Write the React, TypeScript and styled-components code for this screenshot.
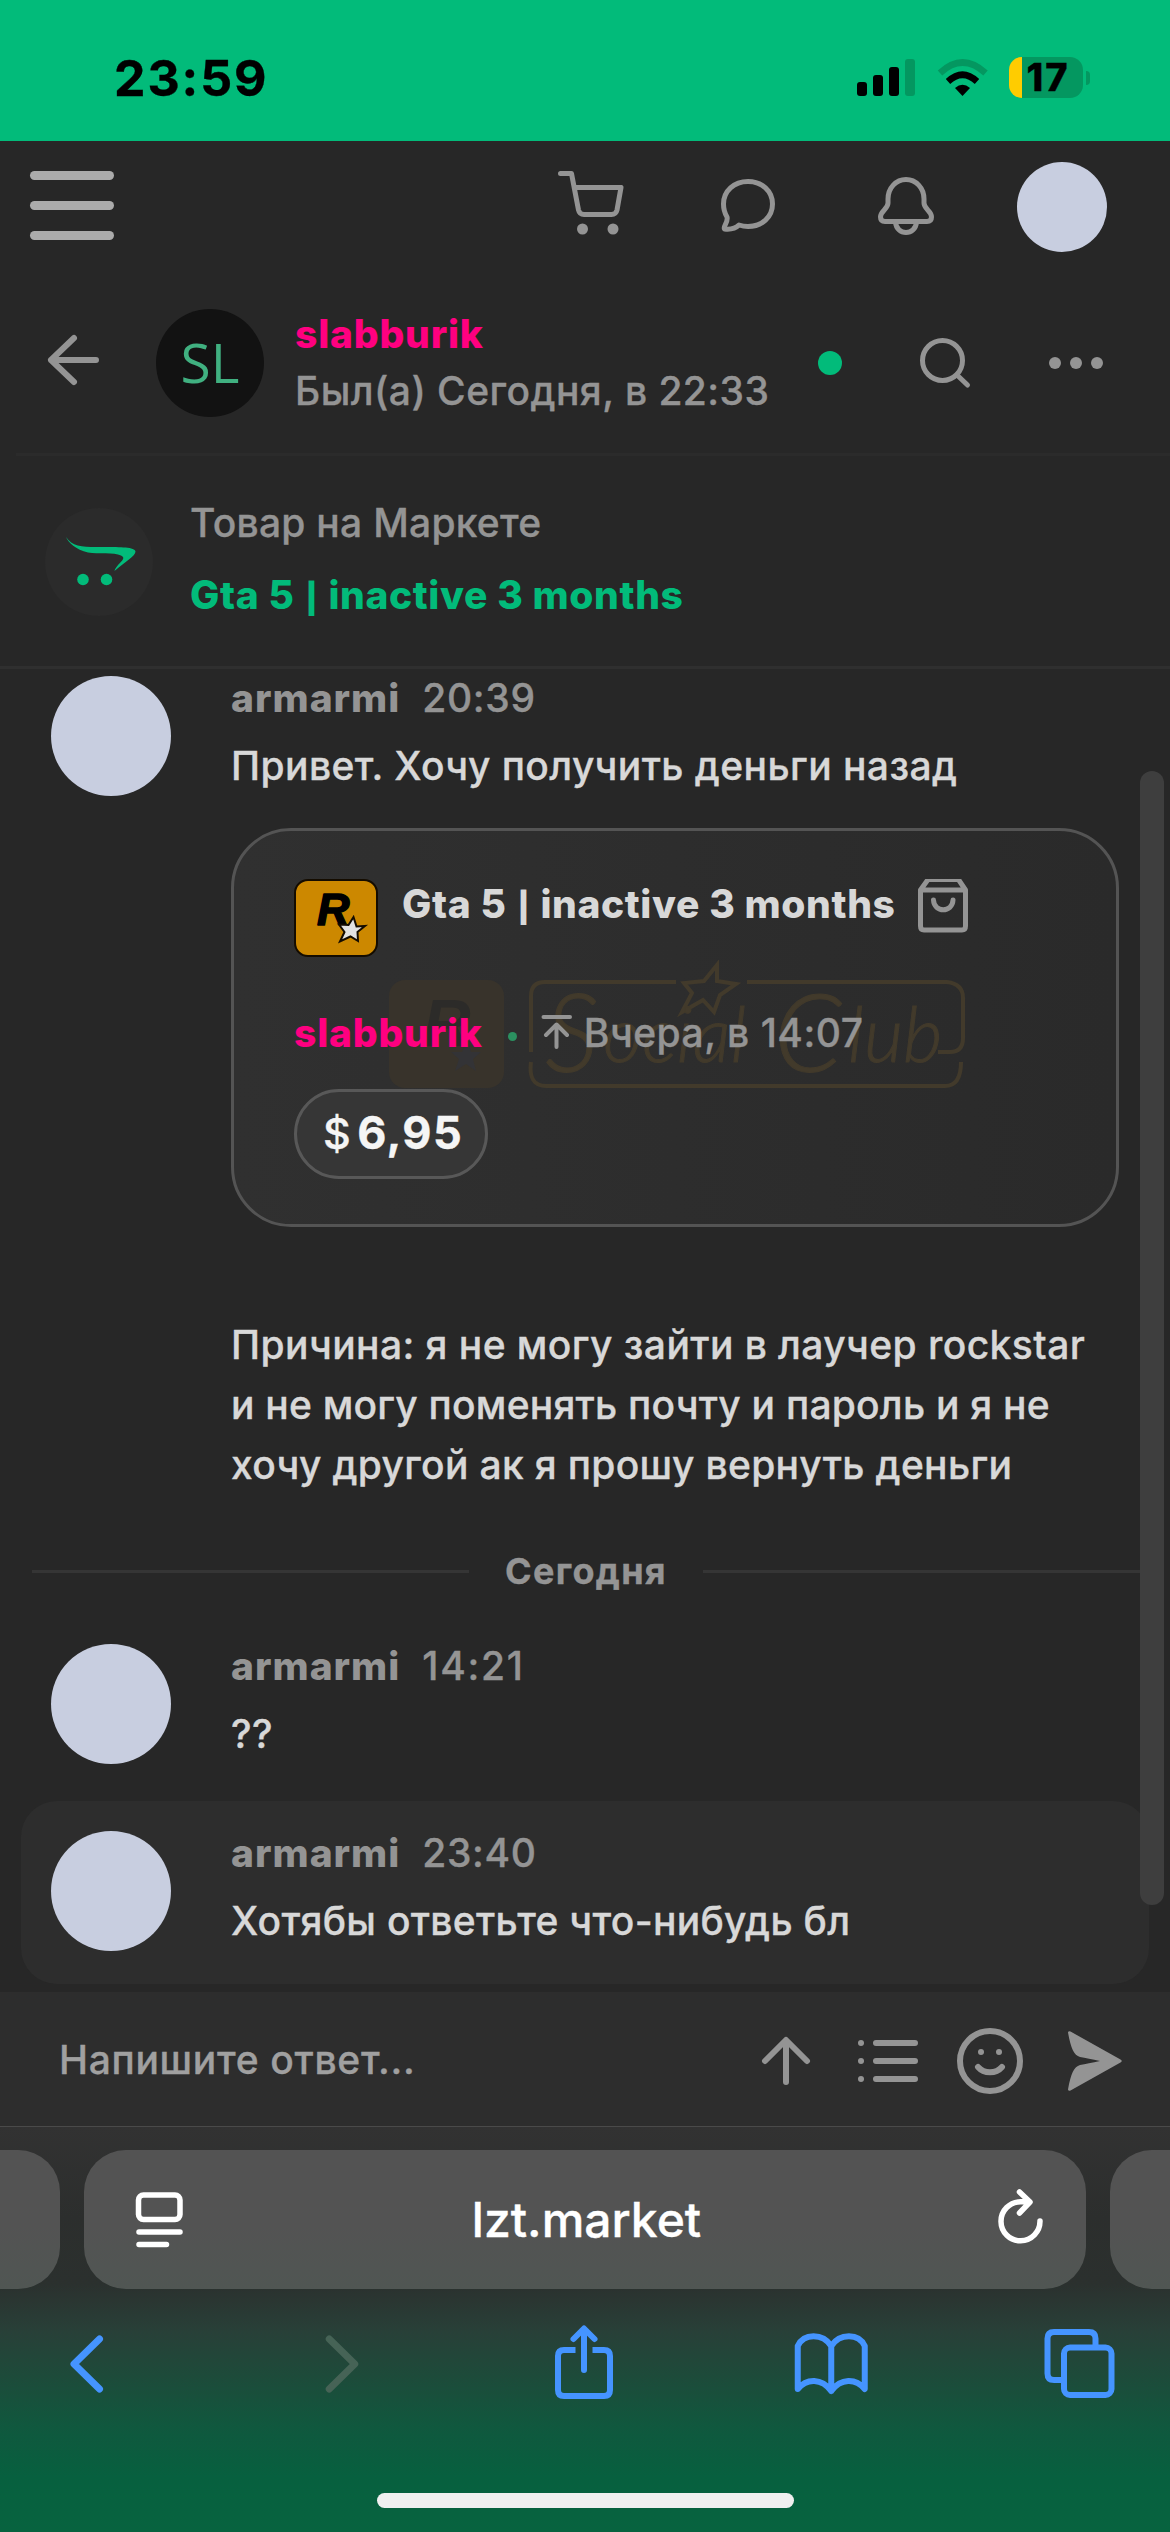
import React from "react";
import styled, { createGlobalStyle } from "styled-components";

const color = {
  brand: "#02bb7a",
  page: "#272727",
  raised: "#2d2d2d",
  muted: "#949494",
  text: "#d8d8d8",
  pink: "#ff0080",
  avatar: "#c8cee0",
  blue: "#4594ff",
};

const GlobalStyle = createGlobalStyle`
  * { box-sizing: border-box; }
  body { margin: 0; background: ${color.page}; }
`;

const Screen = styled.div`
  display: flex;
  flex-direction: column;
  width: 1170px;
  height: 2532px;
  overflow: hidden;
  background: ${color.page};
  color: ${color.text};
  font-family: Inter, "Liberation Sans", sans-serif;
  font-size: 39px;
  font-weight: 500;
  white-space: nowrap;
  -webkit-text-stroke: 0.35px currentColor;
`;

const Icon = styled.svg<{ $gap?: number; $tone?: string; $stroke?: number }>`
  display: block;
  flex: none;
  margin-left: ${(p) => p.$gap ?? 0}px;
  fill: none;
  stroke: ${(p) => p.$tone ?? color.muted};
  stroke-width: ${(p) => p.$stroke ?? 5}px;
  stroke-linecap: round;
  stroke-linejoin: round;
  .solid {
    fill: ${(p) => p.$tone ?? color.muted};
    stroke: none;
  }
`;

/* Status bar */
const StatusBar = styled.header`
  display: flex;
  flex: none;
  height: 141px;
  padding: 0 80px 0 114px;
  background: ${color.brand};
  color: #000;
`;

const Clock = styled.time`
  margin-top: 48px;
  font-size: 50px;
  font-weight: 700;
  line-height: 60px;
  letter-spacing: 1.9px;
`;

const StatusIcons = styled.div`
  display: flex;
  align-items: flex-start;
  margin-left: auto;
  padding-top: 57px;
`;

const Battery = styled.div`
  display: flex;
  align-items: center;
  justify-content: center;
  width: 74px;
  height: 41px;
  margin-left: 20px;
  padding-left: 4px;
  border-radius: 13px;
  background: linear-gradient(90deg, #ffcc00 13px, #049760 13px);
  font-size: 38px;
  font-weight: 800;
  line-height: 41px;
  letter-spacing: 2px;
`;

const BatteryTip = styled.div`
  width: 4px;
  height: 14px;
  margin: 14px 0 0 3px;
  border-radius: 0 4px 4px 0;
  background: #049760;
`;

/* Site navigation */
const SiteNav = styled.nav`
  display: flex;
  flex: none;
  align-items: center;
  height: 132px;
  padding: 0 63px 0 30px;
`;

const Burger = styled.div`
  display: flex;
  flex-direction: column;
  gap: 21px;
  width: 84px;
  margin: 0 auto 3px 0;
`;

const BurgerLine = styled.span`
  height: 9px;
  border-radius: 5px;
  background: #ababab;
`;

const Avatar = styled.div<{ $size: number; $gap?: number }>`
  flex: none;
  width: ${(p) => p.$size}px;
  height: ${(p) => p.$size}px;
  margin-left: ${(p) => p.$gap ?? 0}px;
  border-radius: 50%;
  background: ${color.avatar};
`;

/* Conversation header */
const ChatHeader = styled.header`
  display: flex;
  flex: none;
  align-items: center;
  height: 183px;
  margin-left: 16px;
  padding: 0 63px 0 29px;
  border-bottom: 3px solid #2b2b2b;
`;

const Initials = styled(Avatar)`
  display: flex;
  align-items: center;
  justify-content: center;
  background: #121212;
  color: #40b080;
  font-family: "Open Sans", "Noto Sans", sans-serif;
  font-size: 55px;
  font-weight: 400;
  line-height: 108px;
  padding-bottom: 3px;
  -webkit-text-stroke: 0;
`;

const Peer = styled.div`
  display: flex;
  flex-direction: column;
  margin: 0 auto 2px 31px;
  line-height: 57px;
`;

const UserName = styled.span<{ $muted?: boolean }>`
  color: ${(p) => (p.$muted ? color.muted : color.pink)};
  font-weight: 800;
  letter-spacing: ${(p) => (p.$muted ? 1 : 0.8)}px;
  -webkit-text-stroke: 0;
`;

const LastSeen = styled.span`
  color: ${color.muted};
  letter-spacing: 0.45px;
`;

const OnlineDot = styled.span`
  width: 24px;
  height: 24px;
  border-radius: 50%;
  background: ${color.brand};
`;

/* Linked market item */
const LinkedItem = styled.section`
  display: flex;
  flex: none;
  align-items: center;
  height: 213px;
  padding-left: 45px;
  border-bottom: 3px solid #2f2f2f;
`;

const MarketBadge = styled.div`
  display: flex;
  align-items: center;
  justify-content: center;
  width: 108px;
  height: 108px;
  margin-top: 2px;
  border-radius: 50%;
  background: #2b2b2b;
`;

const LinkedText = styled.div`
  display: flex;
  flex-direction: column;
  margin: 0 0 4px 37px;
  line-height: 72px;
`;

const LinkedLabel = styled.span`
  color: ${color.muted};
  letter-spacing: 0.26px;
`;

const LinkedTitle = styled.a`
  color: ${color.brand};
  font-weight: 800;
  letter-spacing: 0.62px;
  -webkit-text-stroke: 0;
`;

/* Short vertical bar between the parts of an item title */
const Bar = styled.span`
  margin: 0 1px 0 2px;
  font-size: 0.76em;
  font-weight: 900;
  line-height: 1;
`;

/* Messages */
const Messages = styled.main`
  position: relative;
  flex: none;
  height: 1323px;
  padding-top: 4px;
  overflow: hidden;
`;

const ScrollThumb = styled.div`
  position: absolute;
  top: 102px;
  right: 6px;
  width: 24px;
  height: 1134px;
  border-radius: 12px;
  background: #3e3e3e;
`;

const Message = styled.article<{ $highlight?: boolean }>`
  display: flex;
  margin: ${(p) => (p.$highlight ? "37px 21px 0" : "0 21px")};
  padding: ${(p) => (p.$highlight ? "27px 30px 33px" : "0 30px")};
  border-radius: 36px;
  background: ${(p) => (p.$highlight ? color.raised : "transparent")};
`;

const SenderAvatar = styled(Avatar)`
  margin-top: 3px;
`;

const MessageBody = styled.div`
  flex: none;
  width: 888px;
  margin-left: 60px;
`;

const MessageMeta = styled.div`
  display: flex;
  gap: 22px;
  margin-bottom: 13px;
  color: ${color.muted};
  line-height: 50px;
`;

const SentAt = styled.time<{ $tracking?: number }>`
  letter-spacing: ${(p) => p.$tracking ?? 0.65}px;
`;

const MessageText = styled.p<{ $top?: number; $tracking?: number }>`
  margin: ${(p) => p.$top ?? 0}px 0 0;
  line-height: 60px;
  letter-spacing: ${(p) => p.$tracking ?? 0.43}px;
`;

const DayDivider = styled.div`
  display: flex;
  align-items: center;
  gap: 36px;
  margin: 52px 30px 46px 32px;
  color: ${color.muted};
  font-size: 36px;
  font-weight: 700;
  line-height: 48px;
  letter-spacing: 1.3px;
  &::before,
  &::after {
    content: "";
    flex: 1;
    height: 3px;
    background: #353535;
  }
`;

/* Item card */
const ItemCard = styled.section`
  position: relative;
  height: 399px;
  margin-top: 32px;
  padding: 48px 60px 0;
  border: 3px solid #545454;
  border-radius: 60px;
  background: linear-gradient(90deg, #303030, #2a2a2a);
`;

const Watermark = styled.svg`
  position: absolute;
  top: 129px;
  left: 152px;
  fill: none;
  stroke: #423a2b;
  stroke-width: 4px;
`;

const CardRow = styled.div`
  position: relative;
  display: flex;
  align-items: flex-start;
  line-height: 48px;
`;

const CardTitle = styled.h2`
  margin: 1px 0 0 24px;
  font-size: 39px;
  font-weight: 800;
  line-height: 48px;
  letter-spacing: 0.62px;
  -webkit-text-stroke: 0;
`;

const SellerRow = styled(CardRow)`
  margin-top: 52px;
  color: ${color.muted};
`;

const Separator = styled.span`
  width: 9px;
  height: 9px;
  margin: 23px 0 0 25px;
  border-radius: 50%;
  background: #2b9060;
`;

const Published = styled.span`
  margin-left: 11px;
  letter-spacing: 0.5px;
`;

const Price = styled.div`
  position: relative;
  display: flex;
  gap: 5px;
  width: 194px;
  height: 90px;
  margin-top: 32px;
  padding-left: 26px;
  border: 3px solid #585858;
  border-radius: 45px;
  background: #363636;
  color: #f5f5f5;
  font-size: 45px;
  font-weight: 700;
  line-height: 82px;
  letter-spacing: 1.4px;
`;

const Currency = styled.span`
  font-size: 43px;
  font-weight: 500;
`;

/* Composer */
const Composer = styled.form`
  display: flex;
  flex: none;
  align-items: center;
  height: 134px;
  padding: 0 45px 0 59px;
  background: ${color.raised};
`;

const Placeholder = styled.label`
  margin-right: auto;
  color: #a0a0a0;
  letter-spacing: 0.68px;
`;

/* Browser chrome */
const BrowserBar = styled.footer`
  display: flex;
  flex: none;
  flex-direction: column;
  align-items: center;
  height: 406px;
  padding-top: 23px;
  border-top: 1px solid #4a4a4a;
  background: linear-gradient(
    180deg,
    #323232 0,
    #2c2e2d 90px,
    #2b302e 155px,
    #284038 205px,
    #1d4b3a 250px,
    #10583e 300px,
    #07603f 350px,
    #07633f 406px
  );
`;

const Tabs = styled.div`
  display: grid;
  grid-template-columns: 60px 1002px 60px;
  gap: 24px;
  height: 139px;
`;

const SideTab = styled.div<{ $side: "left" | "right" }>`
  border-radius: ${(p) => (p.$side === "left" ? "0 42px 42px 0" : "42px 0 0 42px")};
  background: linear-gradient(180deg, #535353 55%, #505653);
`;

const AddressBar = styled.div`
  display: flex;
  align-items: center;
  justify-content: space-between;
  padding: 0 40px 0 49px;
  border-radius: 42px;
  background: linear-gradient(180deg, #535353 55%, #505653);
  color: #fff;
  font-size: 48px;
`;

const Host = styled.span`
  margin-right: 6px;
`;

const Toolbar = styled.div`
  display: flex;
  justify-content: space-between;
  width: 1077px;
  margin: 28px 4px 0 0;
`;

const HomeIndicator = styled.div`
  width: 417px;
  height: 15px;
  margin-top: 86px;
  border-radius: 8px;
  background: #f0f0f0;
`;

const RockstarBadge = () => (
  <Icon width="84" height="78" viewBox="294 879 84 78" $stroke={2}>
    <rect x="295" y="880" width="82" height="76" rx="13" fill="#cc8800" stroke="#140c00" />
    <text
      x="317"
      y="925"
      fill="#000"
      stroke="#000"
      strokeWidth="1.500"
      fontFamily="Liberation Sans, sans-serif"
      fontSize="45"
      fontWeight="700"
      fontStyle="italic"
      letterSpacing="0"
    >
      R
    </text>
    <path
      d="M353.500 917 L356.500 926.500 L365 926 L357.500 932 L358 941 L350.500 936.500 L340 941.500 L344.500 932 L339 924.500 L348.500 925 Z"
      fill="#e2e2e2"
      stroke="#140c00"
      strokeLinejoin="miter"
    />
  </Icon>
);

const SocialClubMark = () => (
  <Watermark width="584" height="134" viewBox="386 960 584 134">
    <rect x="389" y="980" width="115" height="108" rx="16" fill="#38332b" stroke="none" />
    <text
      x="423"
      y="1046"
      fill="#2c2b29"
      stroke="none"
      fontFamily="Liberation Sans, sans-serif"
      fontSize="66"
      fontWeight="700"
      fontStyle="italic"
    >
      R
    </text>
    <path d="M467 1040 l4 12 h10 l-8 7 3 12 -10 -7 -11 7 4 -12 -8 -7 h11 Z" fill="#333336" stroke="none" />
    <path d="M676 982 H545 Q531 982 531 996 V1052 M531 1062 Q528 1086 546 1086 H945 Q961 1086 961 1062 M747 982 H947 Q963 984 963 998 V1038 Q963 1052 950 1052 H938" />
    <path d="M717 965 L717 981 L736 984 L720 995 L714 1012 L703 1000 L682 1012 L692 993 L684 983 L704 981 Z" />
    <text
      y="1062"
      fill="#423a2b"
      strokeWidth="1"
      fontFamily="Lato, sans-serif"
      fontStyle="italic"
      fontWeight="300"
      fontSize="76"
    >
      <tspan x="545" y="1072" fontSize="108">S</tspan>
      <tspan x="603" y="1062">ocial</tspan>
      <tspan x="774" y="1072" fontSize="108">C</tspan>
      <tspan x="848" y="1062">lub</tspan>
    </text>
  </Watermark>
);

const ItemName = () => (
  <>
    Gta 5 <Bar>|</Bar> inactive 3 months
  </>
);

export default function App() {
  return (
    <Screen>
      <GlobalStyle />

      <StatusBar>
        <Clock>23:59</Clock>
        <StatusIcons>
          <Icon width="132" height="41" viewBox="856 57 132 41">
            <g stroke="none" fill="#000">
              <rect x="856" y="82" width="10" height="14" rx="3" />
              <rect x="872" y="75" width="10" height="21" rx="3" />
              <rect x="888" y="67" width="10" height="29" rx="3" />
              <rect x="904" y="59" width="10" height="37" rx="3" fill="#049760" />
              <path d="M961.500 96 L954 88 Q961.500 81.500 969 88 Z" />
            </g>
            <g strokeLinecap="butt" strokeWidth="6.500">
              <path d="M939 73 Q961.500 52 984.500 73" stroke="#049760" />
              <path d="M947 81.500 Q961.500 68 976 81.500" stroke="#000" />
            </g>
          </Icon>
          <Battery>17</Battery>
          <BatteryTip />
        </StatusIcons>
      </StatusBar>

      <SiteNav>
        <Burger>
          <BurgerLine />
          <BurgerLine />
          <BurgerLine />
        </Burger>
        <Icon width="75" height="132" viewBox="555 141 75 132">
          <path d="M560.500 173.500 H571.500 L578.500 210 Q579.500 214.500 584 214.500 H611.500 Q616 214.500 617 210 L621 187.500 H575" />
          <circle className="solid" cx="582.500" cy="229" r="5.500" />
          <circle className="solid" cx="613" cy="229" r="5.500" />
        </Icon>
        <Icon width="65" height="132" viewBox="715 141 65 132" $gap={85}>
          <path d="M727 217 C724 212 723.500 208 723.500 204 C723.500 191 734 181.500 748 181.500 C762 181.500 772.500 191 772.500 204 C772.500 217 762 226.500 748 226.500 C744.500 226.500 742 226 739 225 C735 229 729 229.500 724.500 229 C722.500 227 728.500 222 727 217 Z" />
        </Icon>
        <Icon width="67" height="132" viewBox="873 141 67 132" $gap={93}>
          <path d="M888 199 C888 188 896 179.500 906 179.500 C916 179.500 924 188 924 199 V203 C924 209 931.500 211 931.500 217 Q931.500 221.500 927 221.500 H885 Q880.500 221.500 880.500 217 C880.500 211 888 209 888 203 Z" />
          <path d="M895.500 222 C896.500 236 915.500 236 916.500 222" />
        </Icon>
        <Avatar $size={90} $gap={77} />
      </SiteNav>

      <ChatHeader>
        <Icon width="60" height="60" viewBox="45 333 60 60" $stroke={6}>
          <path d="M51 360 H96 M74 338 L51 360 L74 382" />
        </Icon>
        <Initials $size={108} $gap={51}>
          SL
        </Initials>
        <Peer>
          <UserName>slabburik</UserName>
          <LastSeen>Был(а) Сегодня, в 22:33</LastSeen>
        </Peer>
        <OnlineDot />
        <Icon width="60" height="60" viewBox="915 333 60 60" $gap={73}>
          <circle cx="942.500" cy="360.500" r="20" />
          <path d="M957 375 L967.500 385" />
        </Icon>
        <Icon width="62" height="24" viewBox="1045 351 62 24" $gap={70}>
          <circle className="solid" cx="1055" cy="363" r="6" />
          <circle className="solid" cx="1076" cy="363" r="6" />
          <circle className="solid" cx="1097" cy="363" r="6" />
        </Icon>
      </ChatHeader>

      <LinkedItem>
        <MarketBadge>
          <Icon width="108" height="108" viewBox="45 508 108 108" $tone={color.brand}>
            <path
              className="solid"
              d="M66 537 C73 548 85 547 105 547 C120 547 135 547 135.500 551.500 C135.500 556 125 562 114.500 571 C117 563 128 559 121 555.500 C114 552 98 554.500 88 552.500 C76 550 68 542 66 537 Z"
            />
            <circle className="solid" cx="83" cy="579.500" r="5.800" />
            <circle className="solid" cx="106.500" cy="579.500" r="5.800" />
          </Icon>
        </MarketBadge>
        <LinkedText>
          <LinkedLabel>Товар на Маркете</LinkedLabel>
          <LinkedTitle>
            <ItemName />
          </LinkedTitle>
        </LinkedText>
      </LinkedItem>

      <Messages>
        <Message>
          <SenderAvatar $size={120} />
          <MessageBody>
            <MessageMeta>
              <UserName $muted>armarmi</UserName>
              <SentAt>20:39</SentAt>
            </MessageMeta>
            <MessageText>Привет. Хочу получить деньги назад</MessageText>
            <ItemCard>
              <SocialClubMark />
              <CardRow>
                <RockstarBadge />
                <CardTitle>
                  <ItemName />
                </CardTitle>
                <Icon width="56" height="60" viewBox="914 879 56 60" $gap={19}>
                  <path d="M927 879.500 H957.500 L964.500 890 V926 Q964.500 930 961 930 H923 Q919.500 930 919.500 926 V890 Z M920 890 H964" />
                  <path d="M932.500 900 C933 913 951.500 913 952 900" />
                </Icon>
              </CardRow>
              <SellerRow>
                <UserName>slabburik</UserName>
                <Separator />
                <Icon width="32" height="48" viewBox="541 1009 32 48" $gap={24} $stroke={4}>
                  <path d="M543.500 1017 H570 M556.500 1047 V1025 M546 1035 L556.500 1024.500 L567 1035" />
                </Icon>
                <Published>Вчера, в 14:07</Published>
              </SellerRow>
              <Price>
                <Currency>$</Currency>6,95
              </Price>
            </ItemCard>
            <MessageText $top={88}>Причина: я не могу зайти в лаучер rockstar</MessageText>
            <MessageText $tracking={0.22}>и не могу поменять почту и пароль и я не</MessageText>
            <MessageText $tracking={0.33}>хочу другой ак я прошу вернуть деньги</MessageText>
          </MessageBody>
        </Message>

        <DayDivider>Сегодня</DayDivider>

        <Message>
          <SenderAvatar $size={120} />
          <MessageBody>
            <MessageMeta>
              <UserName $muted>armarmi</UserName>
              <SentAt $tracking={1.7}>14:21</SentAt>
            </MessageMeta>
            <MessageText>??</MessageText>
          </MessageBody>
        </Message>

        <Message $highlight>
          <SenderAvatar $size={120} />
          <MessageBody>
            <MessageMeta>
              <UserName $muted>armarmi</UserName>
              <SentAt>23:40</SentAt>
            </MessageMeta>
            <MessageText $tracking={0.3}>Хотябы ответьте что-нибудь бл</MessageText>
          </MessageBody>
        </Message>

        <ScrollThumb />
      </Messages>

      <Composer>
        <Placeholder>Напишите ответ...</Placeholder>
        <Icon width="60" height="80" viewBox="756 2019 60 80" $stroke={6}>
          <path d="M786 2041 V2082 M765 2061 L786 2040 L807 2061" />
        </Icon>
        <Icon width="64" height="80" viewBox="856 2019 64 80" $gap={40} $stroke={6}>
          <path d="M876 2043 H915 M876 2061 H915 M876 2079 H915 M861 2043 h0.010 M861 2061 h0.010 M861 2079 h0.010" />
        </Icon>
        <Icon width="72" height="80" viewBox="954 2019 72 80" $gap={34} $stroke={6}>
          <circle cx="990" cy="2061" r="30" />
          <path d="M981 2052 h0.010 M999 2052 h0.010 M978 2067 C984 2074 996 2074 1002 2067" />
        </Icon>
        <Icon width="60" height="80" viewBox="1065 2019 60 80" $gap={39}>
          <path
            className="solid"
            d="M1068 2032.500 Q1068.500 2030.500 1070.500 2031.500 L1120.500 2059.500 Q1123 2061 1120.500 2062.500 L1070.500 2090.500 Q1068.500 2091.500 1068 2089.500 C1071 2073 1074 2067 1080 2065 Q1088 2063.500 1100 2061 Q1088 2058.500 1080 2057 C1074 2055 1071 2049 1068 2032.500 Z"
          />
        </Icon>
      </Composer>

      <BrowserBar>
        <Tabs>
          <SideTab $side="left" />
          <AddressBar>
            <Icon width="54" height="70" viewBox="133 2185 54 70" $tone="#fff" $stroke={5.5}>
              <rect x="138.500" y="2195" width="41.500" height="24.500" rx="5" />
              <path d="M139 2232 H180 M139 2244.500 H166.500" />
            </Icon>
            <Host>lzt.market</Host>
            <Icon width="54" height="70" viewBox="992 2185 54 70" $tone="#fff" $stroke={5.5}>
              <path d="M1040 2221 A19.500 19.500 0 1 1 1020.500 2201.800 H1029 M1019.500 2192 L1030 2202 L1019.500 2213" />
            </Icon>
          </AddressBar>
          <SideTab $side="right" />
        </Tabs>
        <Toolbar>
          <Icon width="84" height="90" viewBox="44.500 2317 84 90" $tone={color.blue} $stroke={7}>
            <path d="M99 2339 L73.500 2364 L99 2389" />
          </Icon>
          <Icon width="84" height="90" viewBox="292.750 2317 84 90" $tone="#466356" $stroke={7}>
            <path d="M329 2339 L354.500 2364 L329 2389" />
          </Icon>
          <Icon width="84" height="90" viewBox="541 2317 84 90" $tone={color.blue} $stroke={6}>
            <path
              d="M575.500 2350 H564 Q558 2350 558 2356 V2390 Q558 2396 564 2396 H604 Q610 2396 610 2390 V2356 Q610 2350 604 2350 H592.500"
              strokeLinecap="butt"
            />
            <path d="M584 2370 V2329 M573.500 2339 L584 2328.500 L594.500 2339" />
          </Icon>
          <Icon width="84" height="90" viewBox="789.250 2317 84 90" $tone={color.blue} $stroke={6}>
            <path d="M831.500 2391 V2346 C823 2333 804 2333 798 2346 V2389 C807 2378 822 2378 831.500 2391 C841 2378 856 2378 865 2389 V2346 C859 2333 840 2333 831.500 2346" />
          </Icon>
          <Icon width="84" height="90" viewBox="1037.500 2317 84 90" $tone={color.blue} $stroke={6}>
            <rect x="1063.500" y="2347.500" width="47.500" height="47.500" rx="6" />
            <path
              d="M1061 2380 H1053.500 Q1047 2380 1047 2373.500 V2338.500 Q1047 2332 1053.500 2332 H1088.500 Q1095 2332 1095 2338.500 V2345"
              strokeLinecap="butt"
            />
          </Icon>
        </Toolbar>
        <HomeIndicator />
      </BrowserBar>
    </Screen>
  );
}
